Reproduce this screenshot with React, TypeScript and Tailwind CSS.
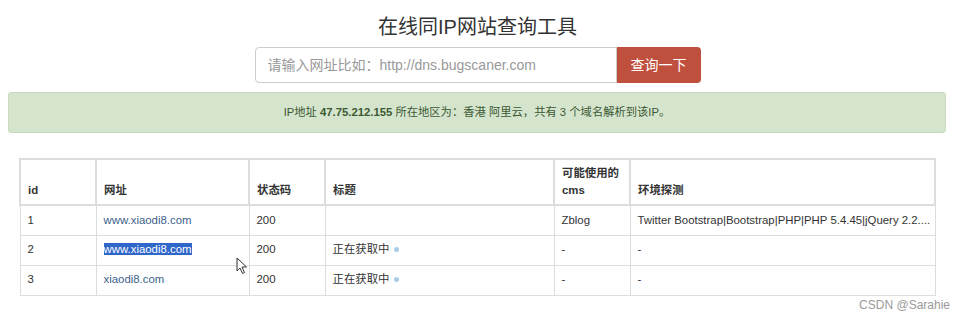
const rows = [
  {
    id: "1",
    url: "www.xiaodi8.com",
    code: "200",
    title: "",
    cms: "Zblog",
    env: "Twitter Bootstrap|Bootstrap|PHP|PHP 5.4.45|jQuery 2.2....",
    selected: false,
  },
  { id: "2", url: "www.xiaodi8.com", code: "200", title: "正在获取中", cms: "-", env: "-", selected: true },
  { id: "3", url: "xiaodi8.com", code: "200", title: "正在获取中", cms: "-", env: "-", selected: false },
];

const font = "font-['Liberation_Sans','Noto_Sans_CJK_SC',sans-serif]";

export default function App() {
  return (
    <div className={`relative h-[318px] w-[965px] overflow-hidden bg-white text-[#333] ${font}`}>
      <div className="w-[955px]">
        <h1 className="pt-[14px] text-center text-[20px] leading-[26px] text-[#333]">在线同IP网站查询工具</h1>
        <div className="mt-[7px] flex justify-center">
          <div className="flex h-9 w-[446px]">
            <input
              className="h-9 w-[362px] rounded-l-[4px] border border-[#ccc] px-3 text-[14px] outline-none placeholder:text-[#999]"
              placeholder="请输入网址比如：http://dns.bugscaner.com"
            />
            <button className="h-9 flex-1 rounded-r-[4px] bg-[#c0503e] text-[14px] text-white">查询一下</button>
          </div>
        </div>
        <div className="ml-2 mt-[9px] flex h-[41px] w-[938px] items-center justify-center rounded-[3px] border border-[#c8dbbe] bg-[#d5e4cd] text-[11.3px] text-[#3c5a33]">
          <span>
            IP地址 <b>47.75.212.155</b> 所在地区为：香港 阿里云，共有 3 个域名解析到该IP。
          </span>
        </div>
        <table className="ml-[19px] mt-[25px] w-[917px] table-fixed border-collapse text-[11.4px]">
          <colgroup>
            <col className="w-[76px]" />
            <col className="w-[153px]" />
            <col className="w-[76px]" />
            <col className="w-[229px]" />
            <col className="w-[76px]" />
            <col />
          </colgroup>
          <thead>
            <tr className="h-[46px]">
              {["id", "网址", "状态码", "标题", "可能使用的 cms", "环境探测"].map((h) => (
                <th
                  key={h}
                  className="border-2 border-[#ddd] px-[7px] pb-[5px] text-left align-bottom font-bold leading-[17px]"
                >
                  {h}
                </th>
              ))}
            </tr>
          </thead>
          <tbody>
            {rows.map((r) => (
              <tr key={r.id} className="h-[30px]">
                <td className="border border-[#ddd] px-[7px]">{r.id}</td>
                <td className="border border-[#ddd] px-[7px]">
                  {r.selected ? (
                    <span className="bg-[#2f66c9] text-white">{r.url}</span>
                  ) : (
                    <span className="text-[#3b5f8b]">{r.url}</span>
                  )}
                </td>
                <td className="border border-[#ddd] px-[7px]">{r.code}</td>
                <td className="border border-[#ddd] px-[7px]">
                  {r.title && (
                    <span className="flex items-center gap-[5px]">
                      {r.title}
                      <span className="h-[5px] w-[5px] rounded-full bg-[#a9cde6]" />
                    </span>
                  )}
                </td>
                <td className="border border-[#ddd] px-[7px]">{r.cms}</td>
                <td className="whitespace-nowrap border border-[#ddd] px-[7px]">{r.env}</td>
              </tr>
            ))}
          </tbody>
        </table>
      </div>
      <svg className="absolute left-[236px] top-[257px]" width="12" height="18" viewBox="0 0 12 18">
        <path d="M1 1 L1 14 L4 11 L6.5 16.5 L8.5 15.5 L6 10 L10.5 10 Z" fill="white" stroke="#333" strokeWidth="1" />
      </svg>
      <div className="absolute bottom-[4px] right-[15px] text-[12px] text-[#9a9a9a]">CSDN @Sarahie</div>
    </div>
  );
}
